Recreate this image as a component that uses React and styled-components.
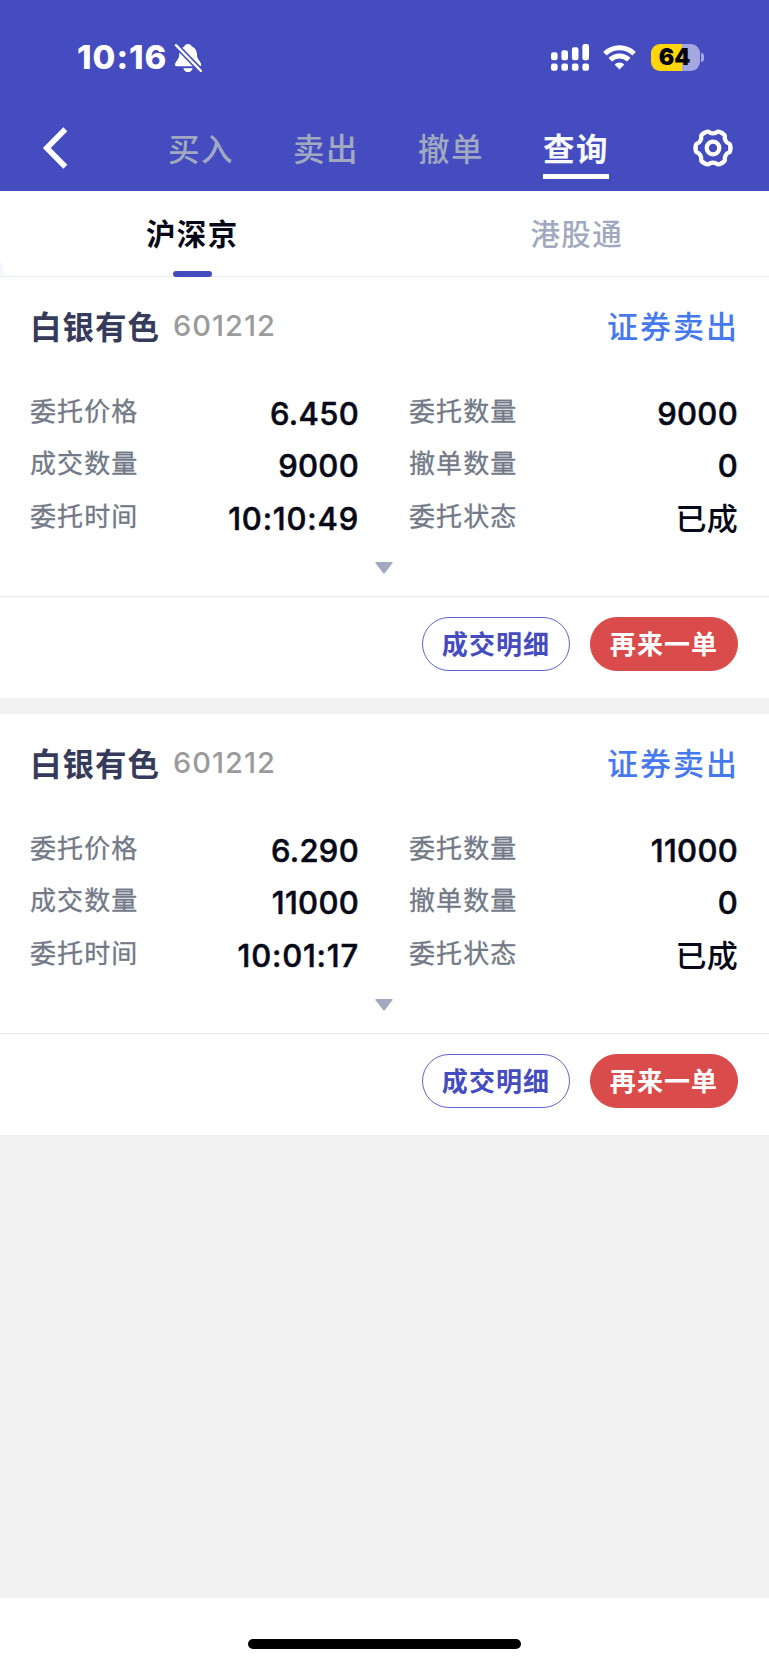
import React from "react";
import styled, { createGlobalStyle } from "styled-components";

const Global = createGlobalStyle`
  * { box-sizing: border-box; }
  body {
    margin: 0;
    background: #fff;
    font-family: Inter, "Noto Sans CJK SC", sans-serif;
  }
`;

const Screen = styled.div`
  display: flex;
  flex-direction: column;
  width: 769px;
  height: 1665px;
  background: #f1f1f1;
  overflow: hidden;
`;

const Header = styled.header`
  height: 191px;
  background: #454cbf;
  color: #fff;
`;

const StatusBar = styled.div`
  display: flex;
  align-items: center;
  justify-content: space-between;
  height: 106px;
  padding: 9px 65px 0 77px;
`;

const StatusGroup = styled.div`
  display: flex;
  align-items: center;
  gap: ${(p) => p.$gap}px;
`;

const Clock = styled.span`
  width: 91px;
  font-size: 33px;
  font-weight: 800;
  line-height: 38px;
  padding-bottom: 2px;
  letter-spacing: 1px;
  white-space: nowrap;
`;

const Battery = styled.div`
  display: flex;
  align-items: center;
  gap: 1px;
  margin-left: 1px;
`;

const BatteryBody = styled.div`
  display: flex;
  align-items: center;
  justify-content: center;
  width: 49px;
  height: 27px;
  padding-right: 2px;
  border-radius: 9px;
  background: linear-gradient(90deg, #ffd60a 64%, #a5a8e0 64%);
  color: #000;
  font-size: 23px;
  font-weight: 900;
  line-height: 27px;
`;

const BatteryTip = styled.div`
  width: 3px;
  height: 9px;
  border-radius: 0 4px 4px 0;
  background: #a5a8e0;
`;

const NavBar = styled.nav`
  display: flex;
  justify-content: space-between;
  height: 85px;
  padding: 0 35px 0 42px;
`;

const IconButton = styled.button`
  display: flex;
  align-items: center;
  height: 85px;
  padding: 0 0 2px;
  border: 0;
  background: none;
  color: #fff;
`;

const NavTabs = styled.div`
  display: flex;
  gap: 59px;
  padding: 17px 0 12px 17px;
`;

const NavTab = styled.a`
  height: 56px;
  border-bottom: 5px solid ${(p) => (p.$active ? "#fff" : "transparent")};
  color: ${(p) => (p.$active ? "#f8f9ff" : "#a0a9c0")};
  font-size: 31.5px;
  font-weight: ${(p) => (p.$active ? 700 : 500)};
  line-height: 53px;
  letter-spacing: 1.5px;
`;

const MarketTabs = styled.div`
  display: flex;
  height: 86px;
  background:
    linear-gradient(#f5f7fc, #f5f7fc) 0 100% / 3px 13px no-repeat,
    #fff;
  border-bottom: 1px solid #e6eef4;
`;

const MarketTab = styled.div`
  display: flex;
  flex: 1;
  flex-direction: column;
  align-items: center;
  justify-content: space-between;
  height: 86px;
  padding: 21px 0 0;
  color: ${(p) => (p.$active ? "#070918" : "#a0a9be")};
  font-size: 29.5px;
  font-weight: ${(p) => (p.$active ? 700 : 500)};
  line-height: 44px;
  letter-spacing: 1.4px;
`;

const TabMark = styled.i`
  width: 39px;
  height: 6px;
  border-radius: 3px;
  background: #454cbf;
`;

const Card = styled.article`
  height: 421px;
  margin-bottom: 16px;
  background: #fff;
`;

const CardTop = styled.div`
  display: flex;
  align-items: center;
  height: 100px;
  padding: 0 30px 5px;
`;

const StockName = styled.h2`
  margin: 0;
  color: #363b5b;
  font-size: 31.5px;
  font-weight: 700;
  letter-spacing: 1px;
`;

const StockCode = styled.span`
  margin-left: 13px;
  padding-top: 2px;
  color: #9b9b9b;
  font-size: 29px;
  font-weight: 500;
  letter-spacing: 1px;
`;

const Side = styled.span`
  margin-left: auto;
  color: #4679ee;
  font-size: 31px;
  font-weight: 500;
  letter-spacing: 2px;
`;

const Fields = styled.dl`
  display: grid;
  grid-template-columns: 1fr 1fr;
  column-gap: 50px;
  margin: 0;
  padding: 9px 31px 0 30px;
`;

const Field = styled.div`
  display: flex;
  justify-content: space-between;
  height: 52.3px;
`;

const Label = styled.dt`
  color: #727987;
  font-size: 26px;
  line-height: 52px;
  letter-spacing: 1.1px;
  -webkit-text-stroke: 0.3px #727987;
`;

const Value = styled.dd`
  margin: 0;
  color: #070918;
  font-size: 31px;
  font-weight: 500;
  line-height: 55px;
  letter-spacing: ${(p) => (p.$time ? 0.8 : 0.3)}px;
  -webkit-text-stroke: ${(p) => (p.$text ? 0 : 0.5)}px #070918;
`;

const Expand = styled.div`
  display: flex;
  justify-content: center;
  height: 54px;
  padding: 19px 1px 0 0;
  border-bottom: 1px solid #e9e9e9;
`;

const Actions = styled.div`
  display: flex;
  justify-content: flex-end;
  gap: 20px;
  padding: 20px 31px 0;
`;

const Pill = styled.button`
  width: 148px;
  height: 54px;
  padding: 0 0 2px;
  border: 1px solid ${(p) => (p.$solid ? "#da4b4b" : "#5c63cb")};
  border-radius: 27px;
  background: ${(p) => (p.$solid ? "#da4b4b" : "#fff")};
  color: ${(p) => (p.$solid ? "#fff" : "#454cbf")};
  font-family: inherit;
  font-size: 26px;
  font-weight: 700;
  letter-spacing: 1.1px;
`;

const HomeArea = styled.footer`
  display: flex;
  justify-content: center;
  height: 67px;
  margin-top: auto;
  padding: 41px 0 0;
  background: #fff;
`;

const HomeBar = styled.div`
  width: 273px;
  height: 10px;
  border-radius: 5px;
  background: #000;
`;

const BellOff = () => (
  <svg width="28" height="30" viewBox="0 0 28 30" fill="#fff">
    <path d="M14 1c1.900 0 3.300 1 3.800 2.600C21.400 5 23 8.300 23 12c0 4.500 4.200 6.500 4.200 10 0 .8-.6 1.200-1.400 1.200H2.300C1.500 23.200 1 22.700 1 22c0-3.500 4.200-5.500 4.200-10 0-3.700 1.600-7 5-8.400C10.700 2 12.100 1 14 1z" />
    <path d="M9.300 25.200h9.400c-.5 2.400-2.300 3.900-4.700 3.900s-4.200-1.500-4.700-3.900z" />
    <path d="M0 0 28 29" stroke="#454cbf" strokeWidth="5.400" />
    <path d="M2 2.200 27 28" stroke="#fff" strokeWidth="2.400" strokeLinecap="round" />
  </svg>
);

const Signal = () => (
  <svg width="38" height="27" viewBox="0 0 38 27" fill="#fff">
    <rect x="0" y="8.300" width="6.600" height="8" rx="2.200" />
    <rect x="10.400" y="6.300" width="6.600" height="10" rx="2.200" />
    <rect x="20.900" y="3.300" width="6.600" height="13" rx="2.200" />
    <rect x="31.400" y="0" width="6.600" height="16.300" rx="2.200" />
    <rect x="0" y="19.500" width="6.600" height="7.200" rx="2.200" />
    <rect x="10.400" y="19.500" width="6.600" height="7.200" rx="2.200" />
    <rect x="20.900" y="19.500" width="6.600" height="7.200" rx="2.200" />
    <rect x="31.400" y="19.500" width="6.600" height="7.200" rx="2.200" />
  </svg>
);

const Wifi = () => (
  <svg width="33" height="25" viewBox="0 0 33 25" fill="none" stroke="#fff" strokeWidth="5">
    <path d="M1.900 8.700a21 21 0 0 1 29.200 0" />
    <path d="M7.300 14.800a13 13 0 0 1 18.400 0" />
    <path d="M16.500 24.600 11.600 19.500a6.800 6.800 0 0 1 9.800 0z" fill="#fff" stroke="none" />
  </svg>
);

const Back = () => (
  <svg width="26" height="42" viewBox="0 0 26 42" fill="none" stroke="#fff" strokeWidth="5.600">
    <path d="M23.300 2.200 4.800 21 23.300 39.800" />
  </svg>
);

const GEAR_SECTOR =
  "M-8.700-15.100Q-5.200-17.200-4-16Q-2.600-14.600 0-14.600Q2.600-14.600 4-16Q5.200-17.200 8.700-15.100";

const Gear = () => (
  <svg width="42" height="40" viewBox="-21 -20 42 40" fill="none" stroke="#fff" strokeWidth="4.300">
    {[0, 60, 120, 180, 240, 300].map((angle) => (
      <path key={angle} d={GEAR_SECTOR} strokeLinecap="round" transform={`rotate(${angle})`} />
    ))}
    <circle r="6.300" />
  </svg>
);

const Triangle = () => (
  <svg width="18" height="12" viewBox="0 0 18 12" fill="#a0a9be">
    <path d="M1.300 0h15.400q1.600 0 .7 1.200L9.900 11q-.9 1-1.800 0L.6 1.200Q-.3 0 1.300 0z" />
  </svg>
);

const NAV = ["买入", "卖出", "撤单", "查询"];

const ORDERS = [
  [
    ["委托价格", "6.450"],
    ["委托数量", "9000"],
    ["成交数量", "9000"],
    ["撤单数量", "0"],
    ["委托时间", "10:10:49"],
    ["委托状态", "已成"],
  ],
  [
    ["委托价格", "6.290"],
    ["委托数量", "11000"],
    ["成交数量", "11000"],
    ["撤单数量", "0"],
    ["委托时间", "10:01:17"],
    ["委托状态", "已成"],
  ],
];

const Order = ({ fields }) => (
  <Card>
    <CardTop>
      <StockName>白银有色</StockName>
      <StockCode>601212</StockCode>
      <Side>证券卖出</Side>
    </CardTop>
    <Fields>
      {fields.map(([label, value]) => (
        <Field key={label}>
          <Label>{label}</Label>
          <Value $text={label === "委托状态"} $time={label === "委托时间"}>
            {value}
          </Value>
        </Field>
      ))}
    </Fields>
    <Expand>
      <Triangle />
    </Expand>
    <Actions>
      <Pill>成交明细</Pill>
      <Pill $solid>再来一单</Pill>
    </Actions>
  </Card>
);

export default function App() {
  return (
    <Screen>
      <Global />
      <Header>
        <StatusBar>
          <StatusGroup $gap={6}>
            <Clock>10:16</Clock>
            <BellOff />
          </StatusGroup>
          <StatusGroup $gap={14}>
            <Signal />
            <Wifi />
            <Battery>
              <BatteryBody>64</BatteryBody>
              <BatteryTip />
            </Battery>
          </StatusGroup>
        </StatusBar>
        <NavBar>
          <IconButton aria-label="返回">
            <Back />
          </IconButton>
          <NavTabs>
            {NAV.map((name) => (
              <NavTab key={name} $active={name === "查询"}>
                {name}
              </NavTab>
            ))}
          </NavTabs>
          <IconButton aria-label="设置">
            <Gear />
          </IconButton>
        </NavBar>
      </Header>
      <MarketTabs>
        <MarketTab $active>
          沪深京
          <TabMark />
        </MarketTab>
        <MarketTab>港股通</MarketTab>
      </MarketTabs>
      {ORDERS.map((fields, i) => (
        <Order key={i} fields={fields} />
      ))}
      <HomeArea>
        <HomeBar />
      </HomeArea>
    </Screen>
  );
}
